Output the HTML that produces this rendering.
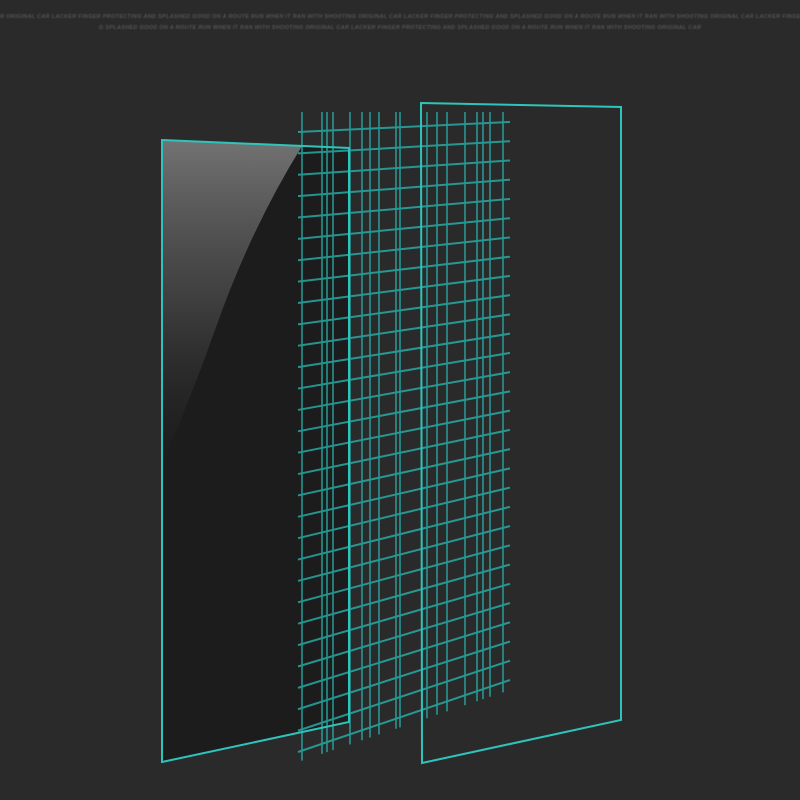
<!DOCTYPE html>
<html><head><meta charset="utf-8"><style>
html,body{margin:0;padding:0;background:#2a2a2a;width:800px;height:800px;overflow:hidden;position:relative}
.t{position:absolute;left:0;width:800px;overflow:hidden;text-align:center;font:italic bold 5.5px "Liberation Sans",sans-serif;color:#555;white-space:nowrap;letter-spacing:0.3px;filter:blur(0.4px)}
</style></head><body>
<div class="t" style="top:14px">R ORIGINAL CAR LACKER FINGER PROTECTING AND SPLASHED GOOD ON A ROUTE RUN WHEN IT RAN WITH SHOOTING ORIGINAL CAR LACKER FINGER PROTECTING AND SPLASHED GOOD ON A ROUTE RUN WHEN IT RAN WITH SHOOTING ORIGINAL CAR LACKER FINGER PROTECTING</div>
<div class="t" style="top:25px">G SPLASHED GOOD ON A ROUTE RUN WHEN IT RAN WITH SHOOTING ORIGINAL CAR LACKER FINGER PROTECTING AND SPLASHED GOOD ON A ROUTE RUN WHEN IT RAN WITH SHOOTING ORIGINAL CAR</div>
<svg id="s" width="800" height="800" style="position:absolute;left:0;top:0">
<defs>
<linearGradient id="g" x1="0" y1="0" x2="0" y2="1">
<stop offset="0" stop-color="#777" stop-opacity="0.95"/>
<stop offset="0.5" stop-color="#555" stop-opacity="0.6"/>
<stop offset="1" stop-color="#333" stop-opacity="0"/>
</linearGradient>
</defs>
<polygon points="162,140 349,148 349,722 162,762" fill="#1c1c1c"/>
<path d="M162,140 L302,146 Q250,230 215,330 Q190,400 162,465 Z" fill="url(#g)"/>
<g id="mesh" stroke="#27b3ac" stroke-width="2" opacity="0.8"></g>
<polygon points="162,140 349,148 349,722 162,762" fill="none" stroke="#2fc4bb" stroke-width="2"/>
<polygon points="421,103 621,107 621,720 422,763" fill="none" stroke="#2fc4bb" stroke-width="2"/>
</svg>
<script>
var m=document.getElementById('mesh'),h='';
var n=30;
for(var i=0;i<n;i++){var f=i/(n-1);var yl=132+f*620;var yr=122+f*558;h+='<line x1="298" y1="'+yl+'" x2="510" y2="'+yr+'"/>';}
var xs=[302,322,327,333,350,362,370,379,396,400,427,437,447,465,477,483,490,503];
xs.forEach(function(x){var f=(x-298)/212;var yb=762-f*72;h+='<line x1="'+x+'" y1="112" x2="'+x+'" y2="'+yb+'" stroke-width="1.6"/>';});
m.innerHTML=h;
</script>
</body></html>
